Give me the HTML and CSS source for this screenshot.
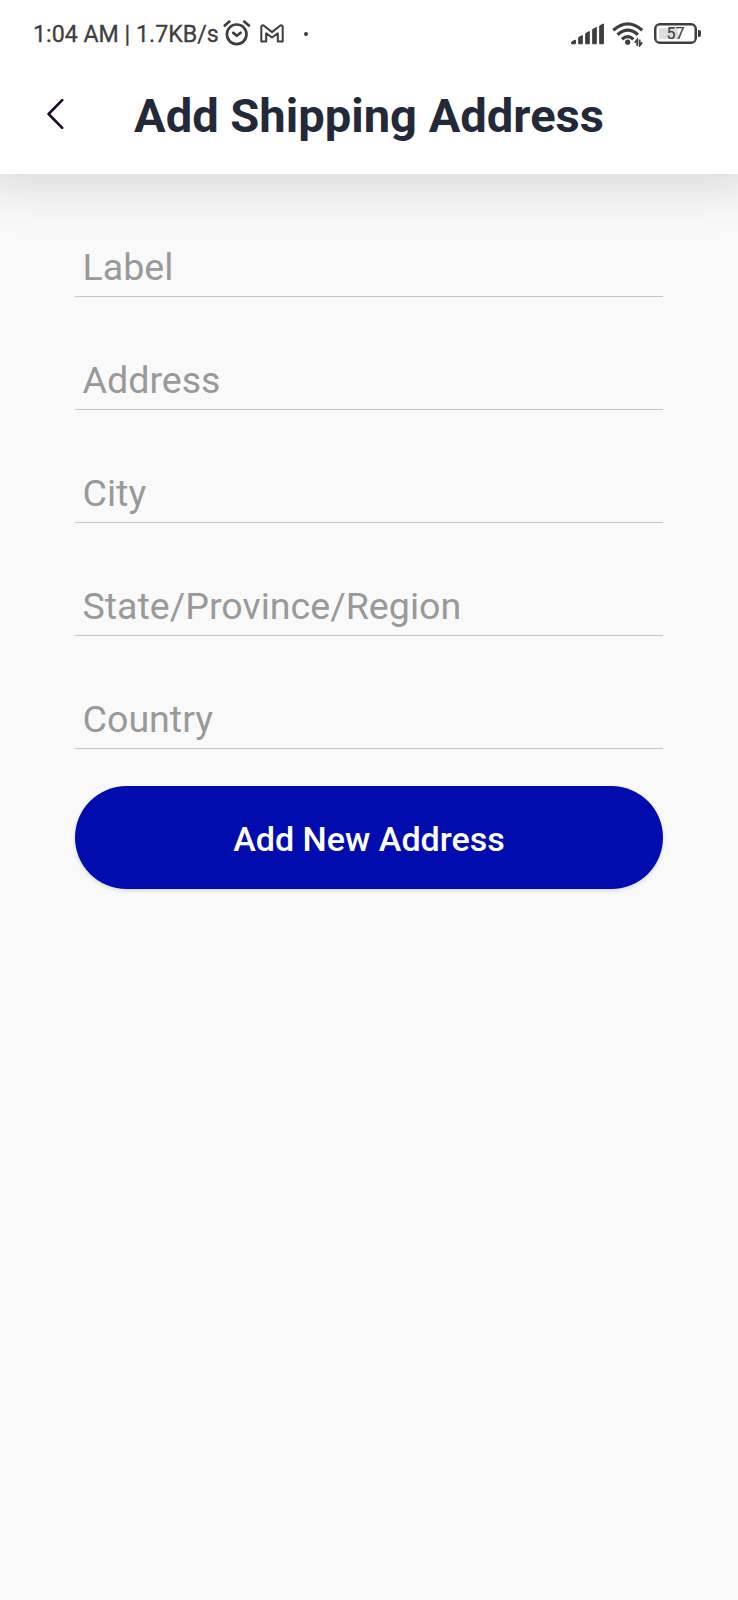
FILE: index.html
```html
<!DOCTYPE html>
<html lang="en">
<head>
<meta charset="utf-8">
<title>Add Shipping Address</title>
<link rel="stylesheet" href="styles.css">
</head>
<body>
<header class="header">
  <div class="status">
    <span class="clock">1:04 AM | 1.7KB/s</span>
    <svg class="alarm" width="28" height="28" viewBox="0 0 28 28" fill="none" stroke="#3e3e3e" stroke-width="2.7" stroke-linecap="round" stroke-linejoin="round">
      <circle cx="13.7" cy="15.3" r="9.8"/>
      <path d="M10.3 13.9l3.5 2.9 3.8-3M1.8 6.6l4.6-4M25.8 6.6l-4.6-4"/>
    </svg>
    <svg class="mail" width="24" height="20" viewBox="0 0 24 20" fill="none" stroke="#3e3e3e" stroke-width="2" stroke-linejoin="round">
      <path d="M1.3 3.1Q1.3 1.3 3.3 1.3L12 8.1 20.7 1.3Q22.7 1.3 22.7 3.1V17.4H17.8V9.3L12 13.5 6.2 9.3V17.4H1.3Z"/>
    </svg>
    <span class="dot"></span>
    <span class="spacer"></span>
    <svg class="signal" width="33" height="22" viewBox="0 0 33 22" fill="#3e3e3e" stroke="#3e3e3e" stroke-linejoin="round">
      <path d="M.6 20.8V19L4.4 17V20.8ZM7.7 20.8V14.5L11.3 12.5V20.8ZM14.7 20.8V10.5L18.3 8.5V20.8ZM21.7 20.8V6.5L25.3 4.5V20.8ZM28.7 20.8V2.9L32.4 .9V20.8Z"/>
    </svg>
    <svg class="wifi" width="33" height="26" viewBox="0 0 33 26" fill="none" stroke="#3e3e3e" stroke-width="3.2">
      <path d="M1.3 9.2Q15.7 -3.6 30.2 9.2M5.6 13.7Q15.7 4.6 25.9 13.7M10 18.2Q15.7 13 21.4 18.2"/>
      <circle cx="15.7" cy="21.2" r="2.6" fill="#3e3e3e" stroke="none"/>
      <path d="M25.2 24.8V18.6L22.7 21.8M27.7 18.4V24.6L30.2 21.4" stroke-width="1.8"/>
    </svg>
    <div class="battery"><span class="level">57</span></div>
  </div>
  <div class="titlebar">
    <svg class="back" width="18" height="32" viewBox="0 0 18 32" fill="none" stroke="#190b28" stroke-width="2.6" stroke-linecap="round" stroke-linejoin="round">
      <path d="M15.2 2.2L1.6 16L15.2 29.8"/>
    </svg>
    <h1 class="title">Add Shipping Address</h1>
  </div>
</header>
<main class="form">
  <div class="field">Label</div>
  <div class="field">Address</div>
  <div class="field">City</div>
  <div class="field">State/Province/Region</div>
  <div class="field">Country</div>
  <button class="submit" type="button">Add New Address</button>
</main>
</body>
</html>
```
FILE: styles.css
```css
* { box-sizing: border-box; }
body {
  margin: 0;
  min-height: 1600px;
  background: #f9f9f9;
  font-family: Roboto, sans-serif;
}
.header {
  height: 174px;
  background: #fff;
  box-shadow: 0 -14px 54px 20px rgba(0, 0, 0, .16);
}
.status {
  display: flex;
  align-items: center;
  height: 68px;
  padding: 0 37px 0 33px;
  color: #3e3e3e;
}
.clock {
  width: 190px;
  font-size: 23.2px;
  font-weight: 400;
  -webkit-text-stroke: .3px #3e3e3e;
  white-space: nowrap;
}
.alarm { margin-top: -2px; }
.mail { margin-left: 9px; margin-top: -1px; }
.dot {
  width: 4px;
  height: 4px;
  margin-left: 20px;
  border-radius: 50%;
  background: #3e3e3e;
}
.spacer { flex: 1; }
.signal { margin-right: 8px; }
.wifi { margin-right: 9px; margin-top: -1px; }
.battery {
  display: flex;
  align-items: center;
  margin-top: -1px;
}
.battery::after {
  content: "";
  width: 3px;
  height: 7px;
  margin-left: 1px;
  border-radius: 0 2px 2px 0;
  background: #3e3e3e;
}
.level {
  width: 43px;
  height: 21px;
  border: 2px solid #3e3e3e;
  box-shadow: inset 0 0 0 .5px #3e3e3e;
  border-radius: 6px;
  background: linear-gradient(90deg, transparent 3px, #dedede 3px, #dedede 22px, transparent 22px) content-box;
  padding: 3px 0;
  font-size: 16px;
  font-weight: 400;
  -webkit-text-stroke: .2px #3e3e3e;
  line-height: 12px;
  text-align: center;
}
.titlebar {
  display: flex;
  align-items: center;
  padding-left: 47px;
  height: 96px;
}
.back { margin-top: -4px; }
.title {
  margin: 0 0 0 69px;
  color: #232939;
  font-size: 47.1px;
  font-weight: 700;
  line-height: 56px;
  white-space: nowrap;
}
.form {
  display: flex;
  flex-direction: column;
  padding: 10px 75px 0;
}
.field {
  height: 113px;
  padding: 61px 7.5px 0;
  border-bottom: 1px solid #c6c6c6;
  color: #999;
  font-size: 37.6px;
  line-height: 44px;
}
.submit {
  height: 103px;
  margin-top: 37px;
  padding-top: 3px;
  border: 0;
  border-radius: 52px;
  background: #000cae;
  box-shadow: 0 2px 4px rgba(0, 0, 0, .12);
  color: #fff;
  font-family: inherit;
  font-size: 34.1px;
  font-weight: 500;
}
```
